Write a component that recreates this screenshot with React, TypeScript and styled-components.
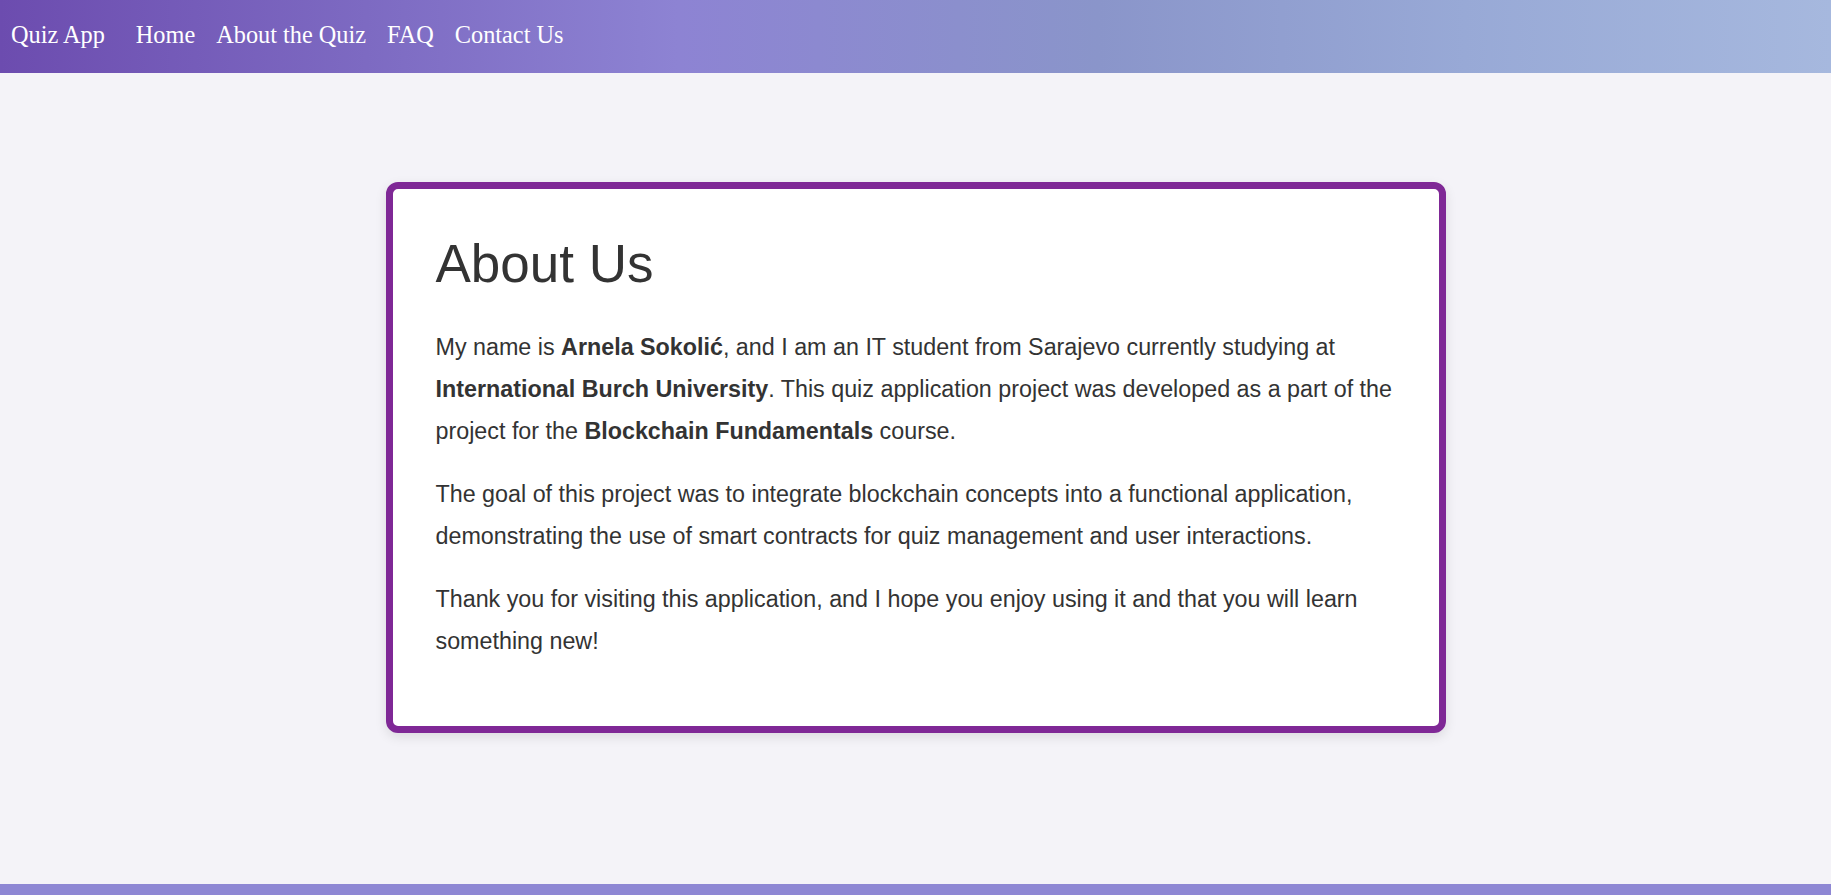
import React from "react";
import styled, { createGlobalStyle } from "styled-components";

const GlobalStyle = createGlobalStyle`
  html, body {
    margin: 0;
    padding: 0;
    background: #f4f3f8;
  }
  * { box-sizing: border-box; }
`;

const Page = styled.div`
  min-height: 100vh;
  display: flex;
  flex-direction: column;
  background: #f4f3f8;
`;

const NavBar = styled.nav`
  height: 73px;
  flex-shrink: 0;
  display: flex;
  align-items: center;
  padding: 0 0 4px 11px;
  background: linear-gradient(
    90deg,
    #6c4caf 0%,
    #7d6ac2 20%,
    #8d83d3 37%,
    #8a95ca 60%,
    #98a9d6 80%,
    #a6b8de 100%
  );
  font-family: "Liberation Serif", "Times New Roman", serif;
`;

const Brand = styled.a`
  color: #ffffff;
  font-size: 24.3px;
  text-decoration: none;
  margin-right: 31px;
`;

const NavLinks = styled.ul`
  display: flex;
  gap: 21px;
  list-style: none;
  margin: 0;
  padding: 0;
`;

const NavLink = styled.a`
  color: #ffffff;
  font-size: 24.3px;
  text-decoration: none;
`;

const Main = styled.main`
  flex: 1;
  display: flex;
  justify-content: center;
  align-items: flex-start;
  padding-top: 109px;
`;

const Card = styled.section`
  width: 1060px;
  background: #ffffff;
  border: 7px solid #7f2896;
  border-radius: 12px;
  box-shadow: 0 4px 12px rgba(0, 0, 0, 0.1);
  padding: 44px 43px 43px 43px;
  font-family: "Liberation Sans", Arial, sans-serif;
  color: #333333;
`;

const Title = styled.h1`
  margin: 0 0 32px 0;
  font-size: 53px;
  font-weight: 400;
  line-height: normal;
  color: #333333;
`;

const Paragraph = styled.p`
  margin: 0 0 21px 0;
  font-size: 23.3px;
  line-height: 42px;
`;

const Strong = styled.strong`
  font-weight: 700;
`;

const Footer = styled.footer`
  height: 11px;
  flex-shrink: 0;
  background: #8e87d4;
`;

export default function App() {
  return (
    <>
      <GlobalStyle />
      <Page>
        <NavBar>
          <Brand href="#">Quiz App</Brand>
          <NavLinks>
            <li><NavLink href="#">Home</NavLink></li>
            <li><NavLink href="#">About the Quiz</NavLink></li>
            <li><NavLink href="#">FAQ</NavLink></li>
            <li><NavLink href="#">Contact Us</NavLink></li>
          </NavLinks>
        </NavBar>
        <Main>
          <Card>
            <Title>About Us</Title>
            <Paragraph>
              My name is <Strong>Arnela Sokolić</Strong>, and I am an IT student from Sarajevo currently studying at{" "}
              <Strong>International Burch University</Strong>. This quiz application project was developed as a part of the
              project for the <Strong>Blockchain Fundamentals</Strong> course.
            </Paragraph>
            <Paragraph>
              The goal of this project was to integrate blockchain concepts into a functional application, demonstrating the
              use of smart contracts for quiz management and user interactions.
            </Paragraph>
            <Paragraph>
              Thank you for visiting this application, and I hope you enjoy using it and that you will learn something new!
            </Paragraph>
          </Card>
        </Main>
        <Footer />
      </Page>
    </>
  );
}
